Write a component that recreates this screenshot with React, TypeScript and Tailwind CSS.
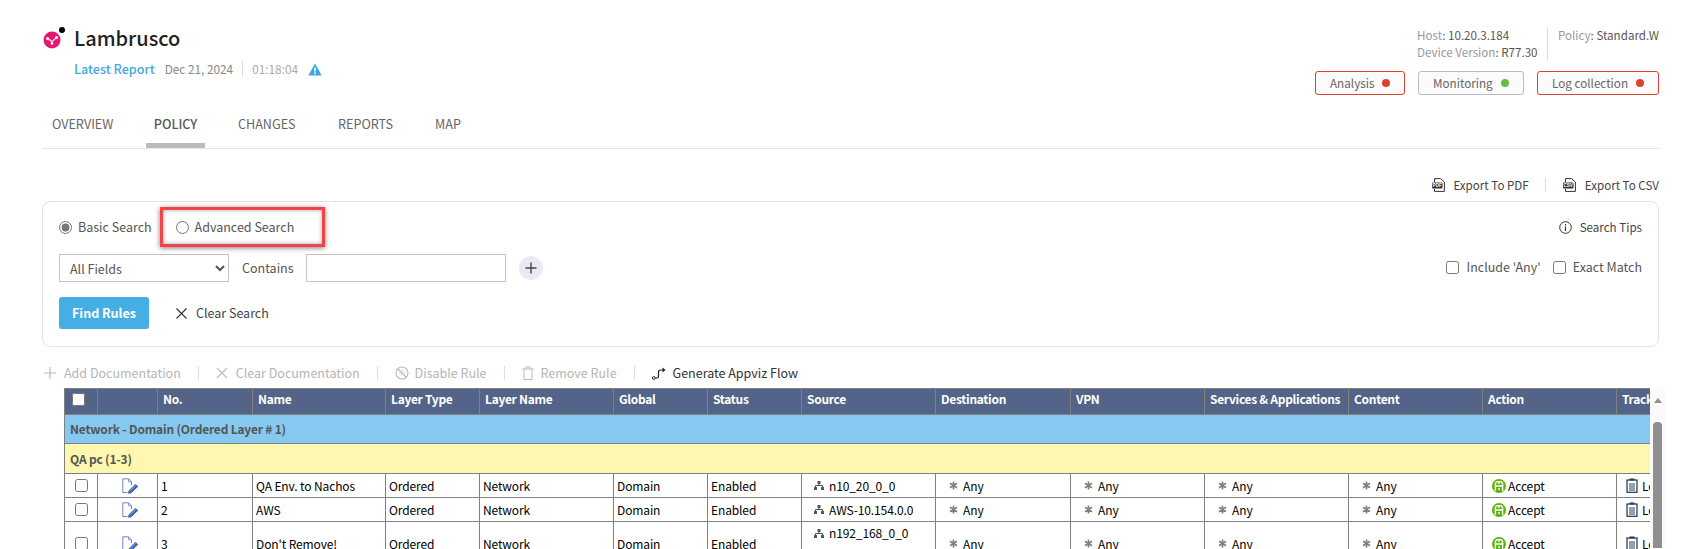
import React from "react";

const COLS = 15;

function Logo() {
  return (
    <svg width="24" height="24" viewBox="0 0 24 24" className="shrink-0">
      <circle cx="10" cy="14" r="8.5" fill="#e6176f" />
      <path d="M5.5 12.5 L10 15.5 L14.5 11.5 M10 15.5 L10 18" stroke="#f9c2d8" strokeWidth="1.6" fill="none" />
      <circle cx="5.5" cy="12.5" r="1.5" fill="#fff" />
      <circle cx="14.5" cy="11.5" r="1.5" fill="#fff" />
      <circle cx="10" cy="17.5" r="1.3" fill="#fff" />
      <circle cx="20" cy="4" r="3" fill="#000" />
    </svg>
  );
}

function Alert() {
  return (
    <svg width="14" height="13" viewBox="0 0 14 13">
      <path d="M7 .5 L13.7 12.5 H.3 Z" fill="#3ca6e2" />
      <rect x="6.2" y="4.5" width="1.6" height="4" fill="#fff" />
      <rect x="6.2" y="9.4" width="1.6" height="1.6" fill="#fff" />
    </svg>
  );
}

function FileIcon({ label }: { label: string }) {
  return (
    <svg width="13" height="14" viewBox="0 0 13 14" className="shrink-0">
      <path d="M2.5 4 V.6 H8.5 L12.4 4 V13.4 H2.5 V11" fill="none" stroke="#333" strokeWidth="1" />
      <rect x="0" y="4.5" width="10.5" height="6" rx="1" fill="#333" />
      <text x="5.2" y="9.3" fontSize="4.6" fontWeight="700" textAnchor="middle" fill="#fff" fontFamily="Liberation Sans">
        {label}
      </text>
    </svg>
  );
}

function EditIcon() {
  return (
    <svg width="17" height="16" viewBox="0 0 17 16">
      <path d="M.8 .8 H6.5 L9.5 3.8 V7 M.8 .8 V14.5 H5.5" fill="none" stroke="#6f83c8" strokeWidth="1" />
      <path d="M6.5 3.8 V.8 M6.5 3.8 H9.5" fill="none" stroke="#6f83c8" strokeWidth="0.8" />
      <path d="M6.5 12.8 L13.5 5.8 L16.2 8.4 L9.2 15.2 L6 15.8 Z" fill="#3f69ad" />
      <path d="M8 12.6 L14 6.8" stroke="#9fb6dc" strokeWidth="0.8" />
    </svg>
  );
}

function NetIcon() {
  return (
    <svg width="10" height="9" viewBox="0 0 10 9" className="shrink-0">
      <rect x="3.5" y="0" width="3" height="3" fill="#555" />
      <rect x="0" y="6" width="3" height="3" fill="#555" />
      <rect x="7" y="6" width="3" height="3" fill="#555" />
      <path d="M5 3 V4.5 M1.5 6 V4.5 H8.5 V6" stroke="#555" strokeWidth="1" fill="none" />
    </svg>
  );
}

function Star() {
  return (
    <svg width="9" height="9" viewBox="0 0 9 9" className="shrink-0">
      <path d="M4.5 .5 V8.5 M1 2.3 L8 6.7 M8 2.3 L1 6.7" stroke="#808080" strokeWidth="1.7" />
    </svg>
  );
}

function Accept() {
  return (
    <svg width="14" height="14" viewBox="0 0 14 14" className="shrink-0">
      <circle cx="7" cy="7" r="7" fill="#5cb30c" />
      <path d="M3.4 12 V5.5 Q3.4 2.6 5.6 2.6 H8.4 Q10.6 2.6 10.6 5.5 V12 M3.4 7 H10.6 M7 2.6 V5 M7 9 V11" stroke="#fff" strokeWidth="1.4" fill="none" />
    </svg>
  );
}

function LogIcon() {
  return (
    <svg width="12" height="15" viewBox="0 0 12 15" className="shrink-0">
      <rect x="1" y="2" width="10" height="12.3" fill="none" stroke="#2d3f5e" strokeWidth="1.3" />
      <rect x="3.5" y="0.5" width="5" height="2" fill="#2d3f5e" />
      <path d="M3 6 H9 M3 8 H9 M3 10 H9 M3 12 H9" stroke="#2d3f5e" strokeWidth="1" />
    </svg>
  );
}

function Status({ label, color, red }: { label: string; color: string; red: boolean }) {
  return (
    <div
      className={`h-[24px] flex items-center justify-between pl-[14px] pr-[14px] rounded-[3px] border bg-[#fbfbfb] text-[11.7px] leading-[18px] text-[#666] ${
        red ? "border-[#d9432f]" : "border-[#bdbdbd]"
      }`}
    >
      <span>{label}</span>
      <span className={`w-[8px] h-[8px] rounded-full ${color}`} />
    </div>
  );
}

function Th({ children }: { children?: React.ReactNode }) {
  return (
    <th className="border border-[#808080] px-[5px] pb-[5px] text-left font-bold text-white text-[12px] leading-[16px] tracking-[-0.3px] whitespace-nowrap overflow-hidden">
      {children}
    </th>
  );
}

function Td({ children }: { children?: React.ReactNode }) {
  return <td className="border border-[#808080] px-[3px] text-[12px] tracking-[-0.12px] leading-[18px] text-[#000] whitespace-nowrap overflow-hidden">{children}</td>;
}

function AnyCell() {
  return (
    <Td>
      <span className="flex items-center gap-[5px] pl-[10px]">
        <Star />
        Any
      </span>
    </Td>
  );
}

function Row({ h, n, name, sources }: { h: string; n: string; name: string; sources: string[] }) {
  return (
    <tr className={h}>
      <Td>
        <span className="flex justify-center">
          <input type="checkbox" className="m-0 w-[13px] h-[13px]" />
        </span>
      </Td>
      <Td>
        <span className="flex justify-center pl-[6px]">
          <EditIcon />
        </span>
      </Td>
      <Td>{n}</Td>
      <Td>{name}</Td>
      <Td>Ordered</Td>
      <Td>Network</Td>
      <Td>Domain</Td>
      <Td>Enabled</Td>
      <Td>
        <span className="flex flex-col gap-[3px]">
          {sources.map((s) => (
            <span key={s} className="flex items-center gap-[5px] pl-[9px]">
              <NetIcon />
              {s}
            </span>
          ))}
        </span>
      </Td>
      <AnyCell />
      <AnyCell />
      <AnyCell />
      <AnyCell />
      <Td>
        <span className="flex items-center gap-[2px] pl-[6px]">
          <Accept />
          Accept
        </span>
      </Td>
      <Td>
        <span className="flex items-center gap-[4px] pl-[6px]">
          <LogIcon />
          Log
        </span>
      </Td>
    </tr>
  );
}

export default function App() {
  return (
    <div className="h-[549px] w-[1700px] overflow-hidden bg-white font-['Noto_Sans_CJK_SC','Noto_Sans',sans-serif] text-[12.5px] leading-[18px] text-[#555]">
      <div className="pl-[42px] pr-[41px]">
        <header className="flex justify-between h-[105px]">
          <div className="pt-[24px]">
            <div className="flex items-center h-[28px]">
              <span className="w-[32px] shrink-0">
                <Logo />
              </span>
              <span className="text-[20px] leading-[28px] font-medium text-[#222]">Lambrusco</span>
            </div>
            <div className="flex items-center h-[18px] mt-[8px] pl-[32px]">
              <span className="text-[#45a8e2] text-[12.6px] font-medium">Latest Report</span>
              <span className="ml-[10px] text-[11.8px] text-[#888]">Dec 21, 2024</span>
              <span className="w-px h-[16px] bg-[#ddd] mx-[9px]" />
              <span className="text-[11.8px] text-[#aaa]">01:18:04</span>
              <span className="ml-[10px]">
                <Alert />
              </span>
            </div>
          </div>
          <div className="pt-[27px] w-[344px] flex flex-col items-end">
            <div className="flex w-full h-[34px] text-[11.6px] leading-[17px] pl-[102px]">
              <div className="w-[131px] shrink-0 border-r border-[#ddd] whitespace-nowrap">
                <div>
                  <span className="text-[#999]">Host</span>: 10.20.3.184
                </div>
                <div>
                  <span className="text-[#999]">Device Version</span>: R77.30
                </div>
              </div>
              <div className="pl-[10px] min-w-0 whitespace-nowrap overflow-hidden">
                <span className="text-[#999]">Policy</span>: Standard.Web
              </div>
            </div>
            <div className="flex gap-[13px] mt-[10px] w-full">
              <div className="w-[90px]">
                <Status label="Analysis" color="bg-[#d9432f]" red />
              </div>
              <div className="w-[106px]">
                <Status label="Monitoring" color="bg-[#6dbb3e]" red={false} />
              </div>
              <div className="w-[122px]">
                <Status label="Log collection" color="bg-[#d9432f]" red />
              </div>
            </div>
          </div>
        </header>

        <nav className="flex h-[44px] border-b border-[#e5e5e5] text-[12.6px] text-[#666]">
          <a className="w-[104px] pl-[10px] pt-[10px]">OVERVIEW</a>
          <a className="w-[59px] h-[43px] pt-[10px] text-center font-medium text-[#555] border-b-[5px] border-[#bbb] whitespace-nowrap">POLICY</a>
          <a className="w-[100px] pl-[33px] pt-[10px] whitespace-nowrap">CHANGES</a>
          <a className="w-[97px] pl-[33px] pt-[10px]">REPORTS</a>
          <a className="pl-[33px] pt-[10px]">MAP</a>
        </nav>

        <div className="h-[52px] flex items-start justify-end pt-[27px] text-[11.6px] text-[#444]">
          <span className="flex items-center gap-[8px]">
            <FileIcon label="PDF" />
            Export To PDF
          </span>
          <span className="w-px h-[14px] bg-[#ddd] ml-[16px] mr-[17px] mt-[2px]" />
          <span className="flex items-center gap-[9px]">
            <FileIcon label="CSV" />
            Export To CSV
          </span>
        </div>

        <section className="h-[146px] rounded-[8px] border border-[#e3e3e3] pl-[16px] pr-[16px]">
          <div className="flex justify-between items-start pt-[16px]">
            <div className="flex items-center h-[18px]">
              <label className="flex items-center gap-[6px]">
                <input type="radio" name="mode" defaultChecked className="m-0 accent-[#777]" />
                Basic Search
              </label>
              <div className="ml-[8px] relative flex items-center h-[40px] w-[165px] pl-[13px] gap-[6px] border-[3px] border-[#f24444] shadow-[0_1px_5px_rgba(0,0,0,0.5),inset_0_0_4px_rgba(0,0,0,0.35)]">
                <input type="radio" name="mode" className="m-0" />
                Advanced Search
              </div>
            </div>
            <span className="flex items-center gap-[8px] text-[11.6px] text-[#444]">
              <svg width="13" height="13" viewBox="0 0 13 13">
                <circle cx="6.5" cy="6.5" r="5.8" fill="none" stroke="#333" strokeWidth="1" />
                <path d="M6.5 5.5 V10 M6.5 3 V4.4" stroke="#333" strokeWidth="1.2" />
              </svg>
              Search Tips
            </span>
          </div>
          <div className="flex justify-between items-center mt-[18px] h-[28px]">
            <div className="flex items-center">
              <select className="w-[170px] h-[28px] pl-[6px] border border-[#c4c4c4] bg-white text-[#555]">
                <option>All Fields</option>
              </select>
              <span className="ml-[13px] w-[51px] shrink-0">Contains</span>
              <input className="ml-[13px] w-[200px] h-[28px] border border-[#c4c4c4]" />
              <span className="ml-[13px] w-[24px] h-[24px] rounded-full bg-[#eaeaf6] flex items-center justify-center">
                <svg width="12" height="12" viewBox="0 0 12 12">
                  <path d="M6 .5 V11.5 M.5 6 H11.5" stroke="#444" strokeWidth="1.4" />
                </svg>
              </span>
            </div>
            <div className="flex items-center pb-[2px]">
              <label className="flex items-center gap-[7px]">
                <input type="checkbox" className="m-0" />
                Include 'Any'
              </label>
              <label className="flex items-center gap-[7px] ml-[12px]">
                <input type="checkbox" className="m-0" />
                Exact Match
              </label>
            </div>
          </div>
          <div className="flex items-center mt-[15px]">
            <button className="w-[90px] h-[32px] rounded-[3px] bg-[#45aee3] text-white font-bold">Find Rules</button>
            <svg width="11" height="11" viewBox="0 0 11 11" className="ml-[27px]">
              <path d="M.5 .5 L10.5 10.5 M10.5 .5 L.5 10.5" stroke="#333" strokeWidth="1.1" />
            </svg>
            <span className="ml-[9px] text-[#444]">Clear Search</span>
          </div>
        </section>

        <div className="h-[41px] flex items-start pt-[17px] text-[#b5b5b5]">
          <span className="flex items-center gap-[8px] pl-[2px]">
            <svg width="12" height="12" viewBox="0 0 12 12">
              <path d="M6 0 V12 M0 6 H12" stroke="#bbb" strokeWidth="1.2" />
            </svg>
            Add Documentation
          </span>
          <span className="w-px h-[14px] bg-[#ddd] mx-[17px] mt-[2px]" />
          <span className="flex items-center gap-[8px]">
            <svg width="12" height="12" viewBox="0 0 12 12">
              <path d="M1 1 L11 11 M11 1 L1 11" stroke="#bbb" strokeWidth="1.1" />
            </svg>
            Clear Documentation
          </span>
          <span className="w-px h-[14px] bg-[#ddd] mx-[17px] mt-[2px]" />
          <span className="flex items-center gap-[6px]">
            <svg width="14" height="14" viewBox="0 0 14 14">
              <circle cx="7" cy="7" r="6" fill="none" stroke="#bbb" strokeWidth="1.1" />
              <path d="M3 3 L11 11" stroke="#bbb" strokeWidth="1.1" />
              <path d="M3.5 6 L7.5 10 M6 3.5 L10.5 8" stroke="#ccc" strokeWidth="0.8" />
            </svg>
            Disable Rule
          </span>
          <span className="w-px h-[14px] bg-[#ddd] mx-[17px] mt-[2px]" />
          <span className="flex items-center gap-[7px]">
            <svg width="12" height="14" viewBox="0 0 12 14">
              <path d="M2 3 V13.5 H10 V3 M0.5 3 H11.5 M4 3 V1 H8 V3" stroke="#bbb" strokeWidth="1" fill="none" />
            </svg>
            Remove Rule
          </span>
          <span className="w-px h-[14px] bg-[#ddd] mx-[17px] mt-[2px]" />
          <span className="flex items-center gap-[7px] text-[#333]">
            <svg width="14" height="13" viewBox="0 0 14 13">
              <circle cx="1.8" cy="11" r="1.4" fill="none" stroke="#222" strokeWidth="1" />
              <path d="M3.5 11 H5 Q6.5 11 6.5 9 V5 Q6.5 3 8.5 3 H11" stroke="#222" strokeWidth="1.2" fill="none" />
              <path d="M10.5 0.5 L13.5 3 L10.5 5.5 Z" fill="#222" />
            </svg>
            Generate Appviz Flow
          </span>
        </div>
      </div>

      <div className="flex ml-[64px]">
        <div className="w-[1586px] overflow-hidden">
          <table className="table-fixed border-collapse w-[1686px]">
            <colgroup>
              <col className="w-[33px]" />
              <col className="w-[60px]" />
              <col className="w-[95px]" />
              <col className="w-[133px]" />
              <col className="w-[94px]" />
              <col className="w-[134px]" />
              <col className="w-[94px]" />
              <col className="w-[94px]" />
              <col className="w-[134px]" />
              <col className="w-[135px]" />
              <col className="w-[134px]" />
              <col className="w-[144px]" />
              <col className="w-[134px]" />
              <col className="w-[134px]" />
              <col className="w-[134px]" />
            </colgroup>
            <thead>
              <tr className="h-[26px] bg-[#536488]">
                <Th>
                  <span className="flex justify-center pr-[6px]">
                    <input type="checkbox" className="m-0 w-[13px] h-[13px]" />
                  </span>
                </Th>
                <Th />
                <Th>No.</Th>
                <Th>Name</Th>
                <Th>Layer Type</Th>
                <Th>Layer Name</Th>
                <Th>Global</Th>
                <Th>Status</Th>
                <Th>Source</Th>
                <Th>Destination</Th>
                <Th>VPN</Th>
                <Th>Services &amp; Applications</Th>
                <Th>Content</Th>
                <Th>Action</Th>
                <Th>Track</Th>
              </tr>
            </thead>
            <tbody>
              <tr className="h-[29px] bg-[#85c9f0]">
                <td colSpan={COLS} className="border border-[#808080] px-[5px] font-bold text-[12px] tracking-[-0.2px] text-[#555]">
                  Network - Domain (Ordered Layer # 1)
                </td>
              </tr>
              <tr className="h-[30px] bg-[#fdf7b0]">
                <td colSpan={COLS} className="border border-[#808080] px-[5px] font-bold text-[12px] tracking-[-0.2px] text-[#555]">
                  QA pc (1-3)
                </td>
              </tr>
              <Row h="h-[24px]" n="1" name="QA Env. to Nachos" sources={["n10_20_0_0"]} />
              <Row h="h-[24px]" n="2" name="AWS" sources={["AWS-10.154.0.0"]} />
              <Row h="h-[44px]" n="3" name="Don't Remove!" sources={["n192_168_0_0", "n192_168_1_0"]} />
            </tbody>
          </table>
        </div>
        <div className="w-[15px] h-[160px] bg-[#fafafa] flex flex-col items-center pt-[10px]">
          <span className="w-0 h-0 border-x-[4.5px] border-x-transparent border-b-[5px] border-b-[#8f8f8f]" />
          <span className="w-[9px] flex-1 mt-[19px] rounded-t-[4px] bg-[#8f8f8f]" />
        </div>
      </div>
    </div>
  );
}
